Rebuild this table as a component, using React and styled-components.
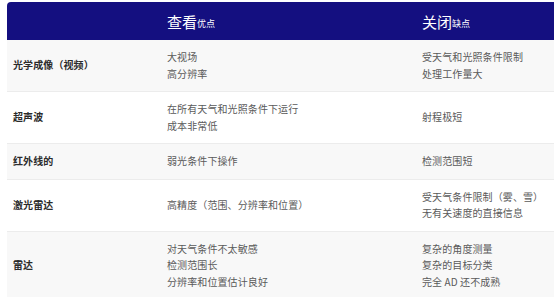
import React from 'react';
import styled, { createGlobalStyle } from 'styled-components';

const GlobalStyle = createGlobalStyle`
  html, body {
    margin: 0;
    padding: 0;
    background: #ffffff;
    overflow: hidden;
  }
  body {
    font-family: "Noto Sans CJK SC", "Noto Sans", sans-serif;
  }
`;

const Wrapper = styled.div`
  padding: 2px 0 0 7px;
  width: 560px;
`;

const Table = styled.div`
  display: grid;
  grid-template-columns: 154px 255px 1fr;
  border-top-left-radius: 4px;
  overflow: hidden;
`;

const HeadCell = styled.div`
  background: #140f80;
  color: #ffffff;
  height: 38px;
  display: flex;
  align-items: center;
  padding: 0 6px;
  font-size: 15px;
`;

const HeadSub = styled.span`
  font-size: 9px;
  margin-top: 5px;
`;

const Cell = styled.div`
  background: ${(p) => (p.$shade ? '#f8f8f8' : '#ffffff')};
  border-bottom: 1px solid #ececec;
  padding: 9px 6px;
  display: flex;
  flex-direction: column;
  justify-content: center;
  font-size: 10px;
  color: ${(p) => (p.$label ? '#2b2b2b' : '#5a5a5a')};
  font-weight: ${(p) => (p.$label ? 700 : 400)};
  letter-spacing: 0.1px;
`;

const Line = styled.div`
  height: 16.5px;
  line-height: 16.5px;
  white-space: nowrap;
`;

const rows = [
  { name: '光学成像（视频）', pros: ['大视场', '高分辨率'], cons: ['受天气和光照条件限制', '处理工作量大'] },
  { name: '超声波', pros: ['在所有天气和光照条件下运行', '成本非常低'], cons: ['射程极短'] },
  { name: '红外线的', pros: ['弱光条件下操作'], cons: ['检测范围短'] },
  { name: '激光雷达', pros: ['高精度（范围、分辨率和位置）'], cons: ['受天气条件限制（雾、雪）', '无有关速度的直接信息'] },
  { name: '雷达', pros: ['对天气条件不太敏感', '检测范围长', '分辨率和位置估计良好'], cons: ['复杂的角度测量', '复杂的目标分类', '完全 AD 还不成熟'] },
];

export default function App() {
  return (
    <Wrapper>
      <GlobalStyle />
      <Table>
        <HeadCell />
        <HeadCell>
          查看<HeadSub>优点</HeadSub>
        </HeadCell>
        <HeadCell>
          关闭<HeadSub>缺点</HeadSub>
        </HeadCell>
        {rows.map((r, i) => (
          <React.Fragment key={r.name}>
            <Cell $shade={i % 2 === 0} $label>
              <Line>{r.name}</Line>
            </Cell>
            <Cell $shade={i % 2 === 0}>
              {r.pros.map((t) => (
                <Line key={t}>{t}</Line>
              ))}
            </Cell>
            <Cell $shade={i % 2 === 0}>
              {r.cons.map((t) => (
                <Line key={t}>{t}</Line>
              ))}
            </Cell>
          </React.Fragment>
        ))}
      </Table>
    </Wrapper>
  );
}
